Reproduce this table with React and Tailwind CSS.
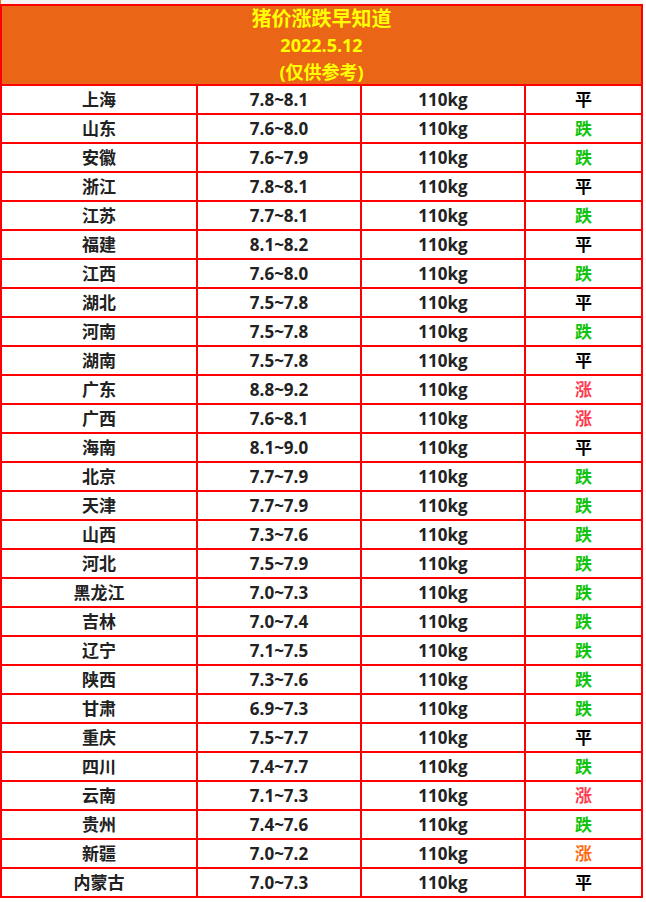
import React from "react";

const rows = [
  ["上海", "7.8~8.1", "平"],
  ["山东", "7.6~8.0", "跌"],
  ["安徽", "7.6~7.9", "跌"],
  ["浙江", "7.8~8.1", "平"],
  ["江苏", "7.7~8.1", "跌"],
  ["福建", "8.1~8.2", "平"],
  ["江西", "7.6~8.0", "跌"],
  ["湖北", "7.5~7.8", "平"],
  ["河南", "7.5~7.8", "跌"],
  ["湖南", "7.5~7.8", "平"],
  ["广东", "8.8~9.2", "涨"],
  ["广西", "7.6~8.1", "涨"],
  ["海南", "8.1~9.0", "平"],
  ["北京", "7.7~7.9", "跌"],
  ["天津", "7.7~7.9", "跌"],
  ["山西", "7.3~7.6", "跌"],
  ["河北", "7.5~7.9", "跌"],
  ["黑龙江", "7.0~7.3", "跌"],
  ["吉林", "7.0~7.4", "跌"],
  ["辽宁", "7.1~7.5", "跌"],
  ["陕西", "7.3~7.6", "跌"],
  ["甘肃", "6.9~7.3", "跌"],
  ["重庆", "7.5~7.7", "平"],
  ["四川", "7.4~7.7", "跌"],
  ["云南", "7.1~7.3", "涨"],
  ["贵州", "7.4~7.6", "跌"],
  ["新疆", "7.0~7.2", "涨", "orange"],
  ["内蒙古", "7.0~7.3", "平"],
];

const trendColor = (t, alt) => {
  if (t === "跌") return "text-[#12c40f]";
  if (t === "涨") return alt === "orange" ? "text-[#ff6a13]" : "text-[#ff3b4f]";
  return "text-black";
};

const App = () => {
  return (
    <div
      className="w-[646px] h-[902px] bg-white"
      style={{ fontFamily: '"Open Sans", "Noto Sans CJK SC", sans-serif' }}
    >
      {/* thin strip above the table */}
      <div className="w-[643px] h-[4px] bg-[#f5f5f5] border-l border-[#ee7a1a]"></div>

      <div className="w-[643px] border-2 border-[#ff0000]">
        {/* header */}
        <div className="h-[78px] bg-[#ea6516] flex flex-col items-center justify-center text-[#ffff00] font-bold text-[18px] leading-[27px]">
          <div className="text-[20px]">猪价涨跌早知道</div>
          <div>2022.5.12</div>
          <div>(仅供参考)</div>
        </div>

        {rows.map(([area, price, trend, alt]) => (
          <div
            key={area}
            className="flex h-[29px] border-t-2 border-[#ff0000] font-bold text-[17px] text-[#222]"
          >
            <div className="w-[194px] flex items-center justify-center">{area}</div>
            <div className="w-[164px] border-l-2 border-[#ff0000] flex items-center justify-center">
              {price}
            </div>
            <div className="w-[164px] border-l-2 border-[#ff0000] flex items-center justify-center">
              110kg
            </div>
            <div
              className={`w-[117px] border-l-2 border-[#ff0000] flex items-center justify-center ${trendColor(
                trend,
                alt
              )}`}
            >
              {trend}
            </div>
          </div>
        ))}
      </div>
    </div>
  );
};

export default App;
